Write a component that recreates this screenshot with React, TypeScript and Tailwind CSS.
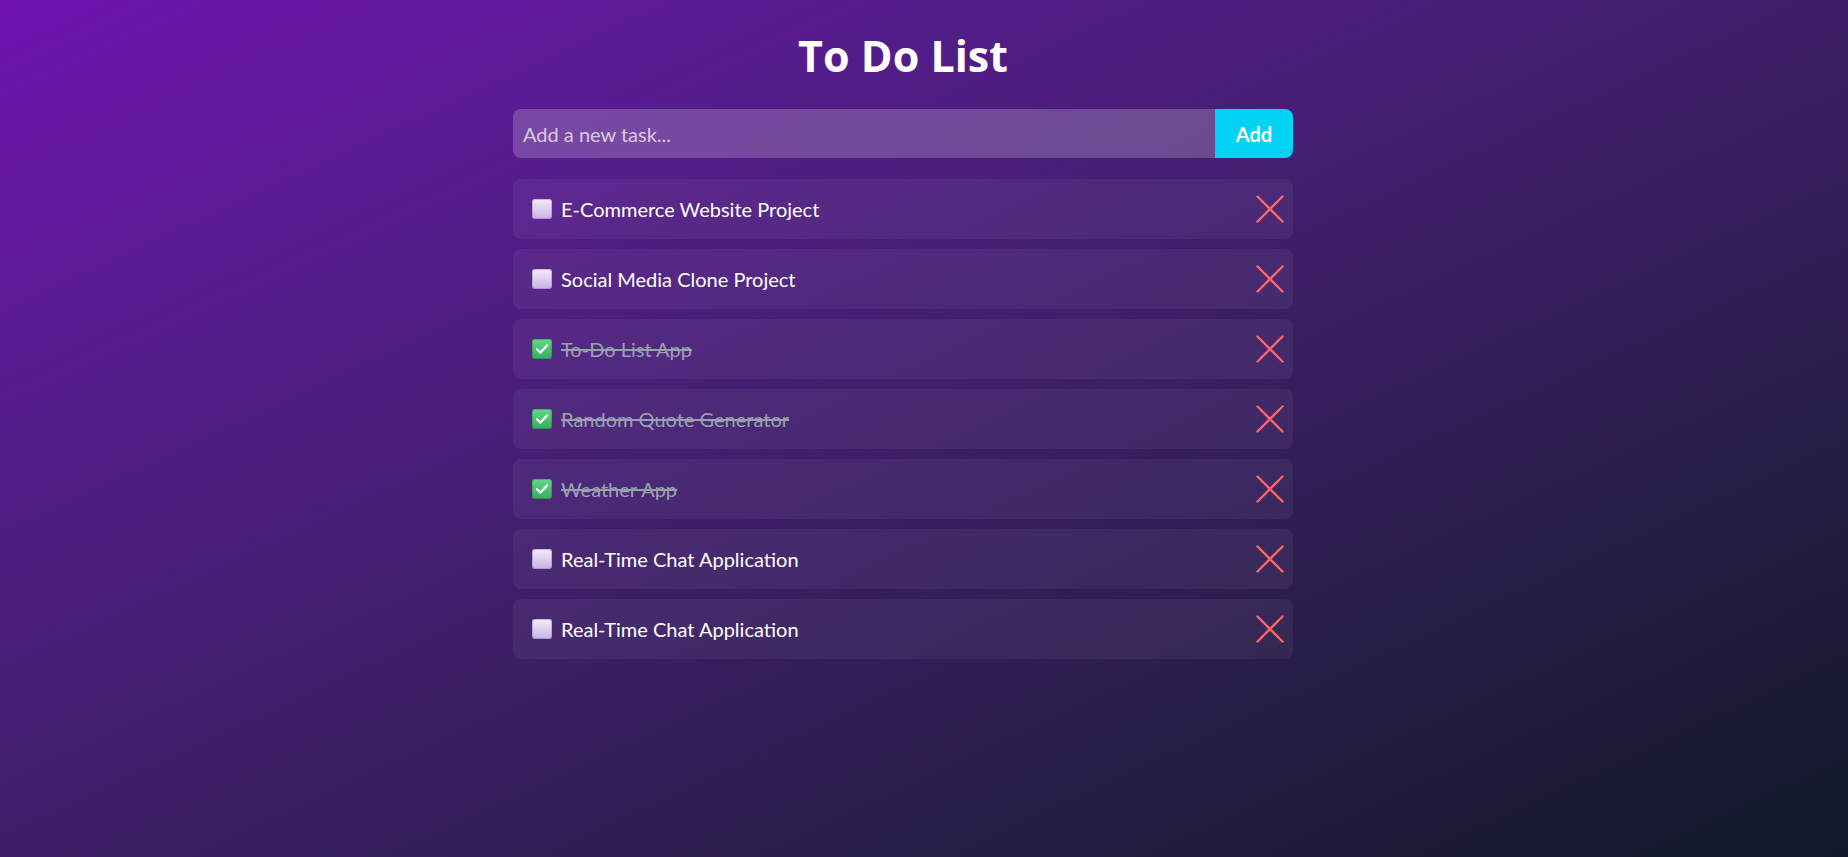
import React from "react";

type Task = { text: string; done: boolean };

const tasks: Task[] = [
  { text: "E-Commerce Website Project", done: false },
  { text: "Social Media Clone Project", done: false },
  { text: "To-Do List App", done: true },
  { text: "Random Quote Generator", done: true },
  { text: "Weather App", done: true },
  { text: "Real-Time Chat Application", done: false },
  { text: "Real-Time Chat Application", done: false },
];

function Box({ done }: { done: boolean }) {
  if (done) {
    return (
      <div className="w-[20px] h-[20px] rounded-[3px] bg-gradient-to-b from-[#62d88c] to-[#33ad5e] shadow-[inset_0_0_0_1px_rgba(20,110,50,0.35)] flex items-center justify-center shrink-0">
        <svg width="14" height="14" viewBox="0 0 14 14" fill="none">
          <path d="M2 7.2 L5.5 10.6 L12 3.4" stroke="white" strokeWidth="2.2" strokeLinecap="round" strokeLinejoin="round" />
        </svg>
      </div>
    );
  }
  return (
    <div className="w-[20px] h-[20px] rounded-[3px] bg-gradient-to-b from-[#f3edf9] to-[#c8b2e2] shadow-[inset_0_0_0_1px_rgba(120,90,160,0.35)] shrink-0" />
  );
}

function XIcon() {
  return (
    <svg width="28" height="28" viewBox="0 0 28 28" fill="none">
      <path d="M1.5 1.5 L26.5 26.5 M26.5 1.5 L1.5 26.5" stroke="#ff6467" strokeWidth="2.4" strokeLinecap="round" />
    </svg>
  );
}

export default function App() {
  return (
    <div
      className="w-full min-h-[857px] h-[857px] bg-linear-to-br from-purple-800 to-gray-900 flex justify-center pr-[42px]"
      style={{ fontFamily: "Lato, 'Noto Sans', sans-serif" }}
    >
      <div className="w-[780px] flex flex-col">
        <h1
          className="text-white text-[43px] leading-[44px] font-bold text-center pt-[34px] mb-[31px]"
          style={{ fontFamily: "'Open Sans', Lato, sans-serif" }}
        >
          To Do List
        </h1>
        <div className="flex h-[49px] mb-[21px]">
          <input
            className="flex-1 h-full bg-white/20 rounded-l-lg pl-[10px] text-[20px] text-white placeholder:text-[#d6cbe2] outline-none"
            placeholder="Add a new task..."
          />
          <button className="w-[78px] h-full bg-cyan-400 rounded-r-lg text-white font-bold text-[20px]">
            Add
          </button>
        </div>
        <div className="flex flex-col gap-[10px]">
          {tasks.map((t, i) => (
            <div
              key={i}
              className="h-[60px] rounded-lg bg-white/5 flex items-center pl-[19px] pr-[9px]"
            >
              <Box done={t.done} />
              <span
                className={
                  "ml-[9px] text-[20px] flex-1 " +
                  (t.done ? "line-through text-gray-400" : "text-white")
                }
              >
                {t.text}
              </span>
              <XIcon />
            </div>
          ))}
        </div>
      </div>
    </div>
  );
}
